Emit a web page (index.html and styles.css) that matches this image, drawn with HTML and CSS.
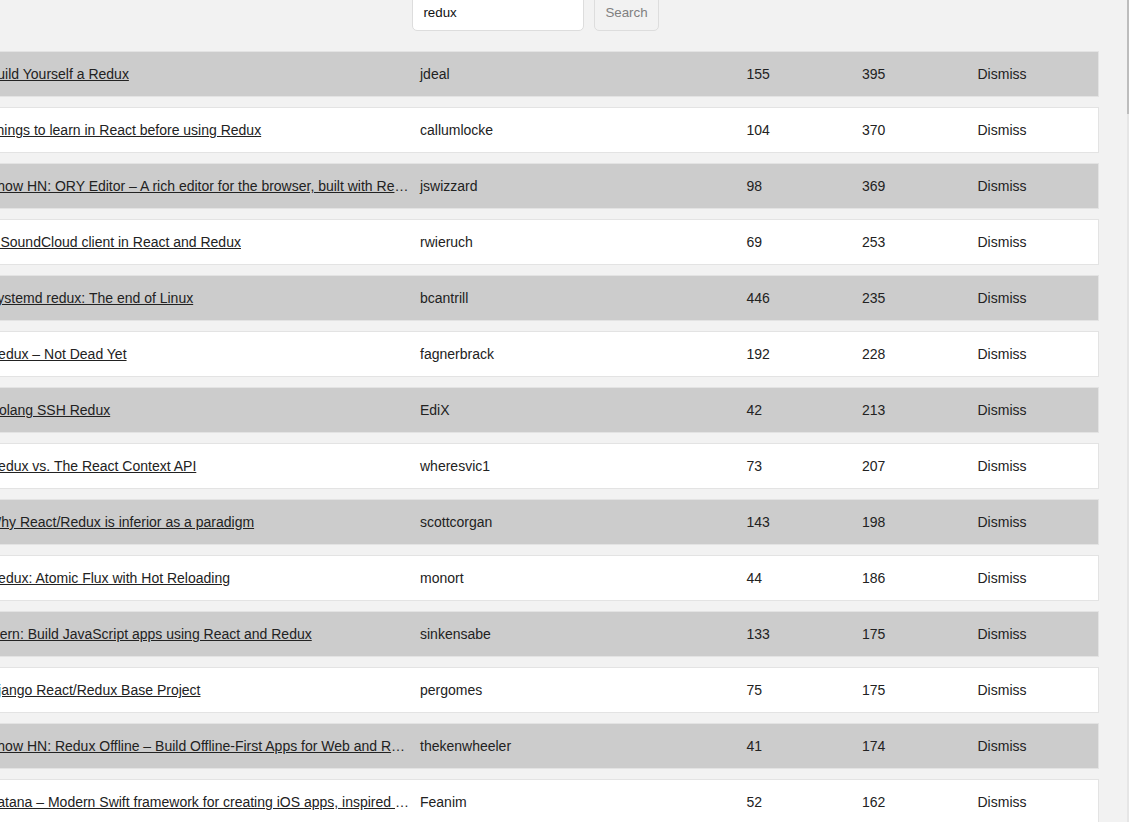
FILE: index.html
```html
<!DOCTYPE html>
<html lang="en">
<head>
<meta charset="utf-8">
<title>Hacker News Search</title>
<link rel="stylesheet" href="styles.css">
</head>
<body>
<div class="page">
  <div class="interactions">
    <form class="search-form"><input type="text" class="search-input" value="redux"><button type="submit" class="search-button">Search</button></form>
  </div>
  <div class="table">
    <div class="table-row row-alt"><span class="col-large"><a href="#">Build Yourself a Redux</a></span><span class="col-mid">jdeal</span><span class="col-small">155</span><span class="col-small">395</span><span class="col-small"><button class="button-inline" type="button">Dismiss</button></span></div>
    <div class="table-row"><span class="col-large"><a href="#">Things to learn in React before using Redux</a></span><span class="col-mid">callumlocke</span><span class="col-small">104</span><span class="col-small">370</span><span class="col-small"><button class="button-inline" type="button">Dismiss</button></span></div>
    <div class="table-row row-alt"><span class="col-large"><a href="#">Show HN: ORY Editor – A rich editor for the browser, built with React and Redux</a></span><span class="col-mid">jswizzard</span><span class="col-small">98</span><span class="col-small">369</span><span class="col-small"><button class="button-inline" type="button">Dismiss</button></span></div>
    <div class="table-row"><span class="col-large"><a href="#">A SoundCloud client in React and Redux</a></span><span class="col-mid">rwieruch</span><span class="col-small">69</span><span class="col-small">253</span><span class="col-small"><button class="button-inline" type="button">Dismiss</button></span></div>
    <div class="table-row row-alt"><span class="col-large"><a href="#">Systemd redux: The end of Linux</a></span><span class="col-mid">bcantrill</span><span class="col-small">446</span><span class="col-small">235</span><span class="col-small"><button class="button-inline" type="button">Dismiss</button></span></div>
    <div class="table-row"><span class="col-large"><a href="#">Redux – Not Dead Yet</a></span><span class="col-mid">fagnerbrack</span><span class="col-small">192</span><span class="col-small">228</span><span class="col-small"><button class="button-inline" type="button">Dismiss</button></span></div>
    <div class="table-row row-alt"><span class="col-large"><a href="#">Golang SSH Redux</a></span><span class="col-mid">EdiX</span><span class="col-small">42</span><span class="col-small">213</span><span class="col-small"><button class="button-inline" type="button">Dismiss</button></span></div>
    <div class="table-row"><span class="col-large"><a href="#">Redux vs. The React Context API</a></span><span class="col-mid">wheresvic1</span><span class="col-small">73</span><span class="col-small">207</span><span class="col-small"><button class="button-inline" type="button">Dismiss</button></span></div>
    <div class="table-row row-alt"><span class="col-large"><a href="#">Why React/Redux is inferior as a paradigm</a></span><span class="col-mid">scottcorgan</span><span class="col-small">143</span><span class="col-small">198</span><span class="col-small"><button class="button-inline" type="button">Dismiss</button></span></div>
    <div class="table-row"><span class="col-large"><a href="#">Redux: Atomic Flux with Hot Reloading</a></span><span class="col-mid">monort</span><span class="col-small">44</span><span class="col-small">186</span><span class="col-small"><button class="button-inline" type="button">Dismiss</button></span></div>
    <div class="table-row row-alt"><span class="col-large"><a href="#">Mern: Build JavaScript apps using React and Redux</a></span><span class="col-mid">sinkensabe</span><span class="col-small">133</span><span class="col-small">175</span><span class="col-small"><button class="button-inline" type="button">Dismiss</button></span></div>
    <div class="table-row"><span class="col-large"><a href="#">Django React/Redux Base Project</a></span><span class="col-mid">pergomes</span><span class="col-small">75</span><span class="col-small">175</span><span class="col-small"><button class="button-inline" type="button">Dismiss</button></span></div>
    <div class="table-row row-alt"><span class="col-large"><a href="#">Show HN: Redux Offline – Build Offline-First Apps for Web and React Native</a></span><span class="col-mid">thekenwheeler</span><span class="col-small">41</span><span class="col-small">174</span><span class="col-small"><button class="button-inline" type="button">Dismiss</button></span></div>
    <div class="table-row"><span class="col-large"><a href="#">Katana – Modern Swift framework for creating iOS apps, inspired by Redux</a></span><span class="col-mid">Feanim</span><span class="col-small">52</span><span class="col-small">162</span><span class="col-small"><button class="button-inline" type="button">Dismiss</button></span></div>
    <div class="table-row row-alt"><span class="col-large"><a href="#">Redux Form</a></span><span class="col-mid">erikras</span><span class="col-small">30</span><span class="col-small">150</span><span class="col-small"><button class="button-inline" type="button">Dismiss</button></span></div>
  </div>
</div>
<div class="scrollbar" aria-hidden="true"><div class="scrollbar-thumb"></div></div>
</body>
</html>
```

FILE: styles.css
```css
html, body {
  margin: 0;
  padding: 0;
}

body {
  color: #222;
  background: #f2f2f2;
  font: 400 14px "Liberation Sans", Arial, sans-serif;
}

a {
  color: #222;
}

.page {
  margin: -6px 30px 20px -28px;
}

.interactions {
  text-align: center;
}

.search-form {
  margin: 0;
}

.search-input,
.search-button {
  font: 400 13.333px "Liberation Sans", Arial, sans-serif;
  padding: 10px;
  border-radius: 5px;
  border: 1px solid #dddddd;
  outline: none;
}

.search-input {
  width: 150px;
  margin-right: 10px;
  background: #ffffff;
  color: #111;
}

.search-button {
  background: transparent;
  color: #808080;
  cursor: pointer;
}

.table {
  margin: 20px 0;
}

.table-row {
  display: flex;
  line-height: 24px;
  white-space: nowrap;
  margin: 10px 0;
  padding: 10px;
  background: #ffffff;
  border: 1px solid #e3e3e3;
}

.table-row.row-alt {
  background: #cccccc;
}

.table-row > span {
  overflow: hidden;
  text-overflow: ellipsis;
  padding: 0 5px;
}

.col-large { width: 40%; }
.col-mid { width: 30%; }
.col-small { width: 10%; }

.button-inline {
  border-width: 0;
  background: transparent;
  color: inherit;
  text-align: inherit;
  padding: 0;
  font: inherit;
  line-height: inherit;
  cursor: pointer;
}

.scrollbar {
  position: fixed;
  top: 0;
  right: 0;
  width: 2px;
  height: 100%;
  background: #e6e6e6;
}

.scrollbar-thumb {
  height: 114px;
  background: #bdbdbd;
}
```
